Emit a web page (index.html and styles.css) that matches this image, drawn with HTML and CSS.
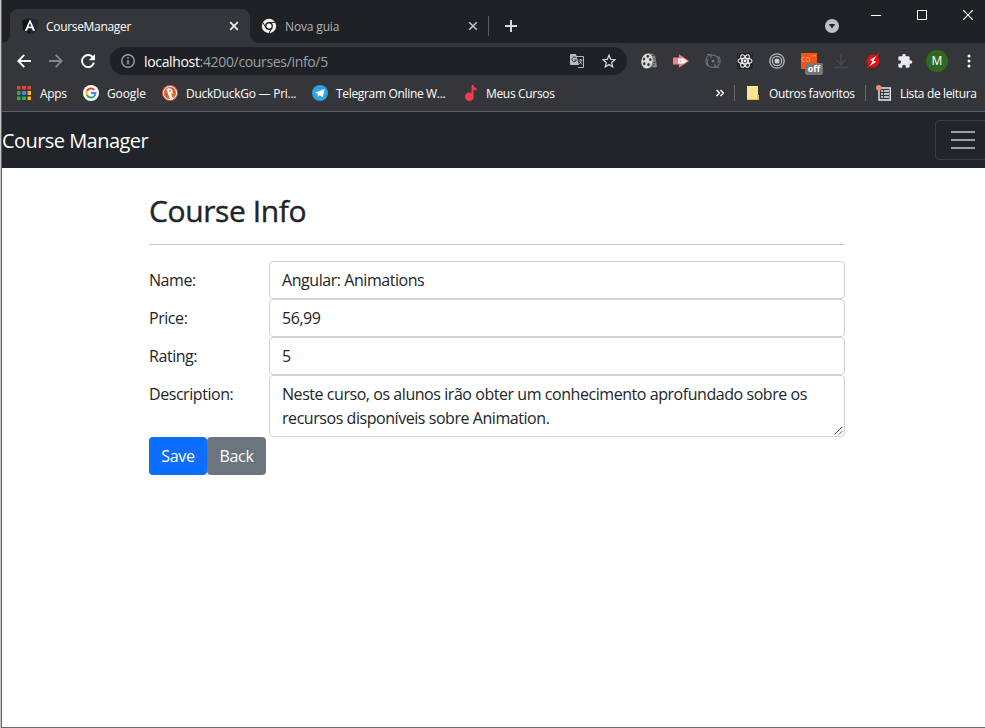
FILE: index.html
```html
<!DOCTYPE html>
<html lang="pt-BR">
<head>
<meta charset="utf-8">
<title>CourseManager</title>
<link rel="stylesheet" href="styles.css">
</head>
<body>
<div class="window">
  <header class="browser">
    <div class="tabstrip">
      <div class="tab tab-active">
        <svg class="ic" width="16" height="16" viewBox="0 0 16 16"><path fill="#10131a" d="M8 0l8 2.600-1.200 10L8 16l-6.800-3.400L0 2.600z"/><path fill="#1d2b3a" d="M8 0l8 2.600-1.200 10L8 16z"/><path fill="#fff" fill-rule="evenodd" d="M8 1.200L2.800 12.800h2.300l1-2.600h3.800l1 2.600h2.300zM8 5l1.400 3.400H6.600z"/></svg>
        <span class="tab-title t-manager">CourseManager</span>
        <svg class="close" width="10" height="10" viewBox="0 0 10 10"><path d="M1.200 1.200l7.600 7.600M8.800 1.200l-7.600 7.600" stroke="#f1f3f4" stroke-width="1.700"/></svg>
      </div>
      <div class="tab tab-idle">
        <svg class="ic" width="16" height="16" viewBox="0 0 16 16"><circle cx="8" cy="8" r="7.200" fill="#f1f1f1"/><circle cx="8" cy="8" r="3.900" fill="#202124"/><circle cx="8" cy="8" r="2.500" fill="#fff"/><path d="M8 4.400h6.400M4.900 9.800L1.700 4.300M11.100 9.800l-3.300 5.500" stroke="#202124" stroke-width="1"/></svg>
        <span class="tab-title t-nova">Nova guia</span>
        <svg class="close" width="10" height="10" viewBox="0 0 10 10"><path d="M1.200 1.200l7.600 7.600M8.800 1.200l-7.600 7.600" stroke="#c5c8cc" stroke-width="1.500"/></svg>
      </div>
      <span class="tab-divider"></span>
      <svg class="new-tab" width="12" height="12" viewBox="0 0 12 12"><path d="M6 0v12M0 6h12" stroke="#d5d7da" stroke-width="2"/></svg>
      <svg class="tab-search" width="14" height="14" viewBox="0 0 14 14"><circle cx="7" cy="7" r="7" fill="#bdc1c6"/><path d="M3.800 5h6.400L7 9.500z" fill="#202124"/></svg>
      <div class="controls">
        <svg width="10" height="10" viewBox="0 0 10 10"><path d="M0 5.500h10" stroke="#fff"/></svg>
        <svg width="10" height="10" viewBox="0 0 10 10"><path d="M.5.5h9v9h-9z" fill="none" stroke="#fff"/></svg>
        <svg width="10" height="10" viewBox="0 0 10 10"><path d="M0 0l10 10M10 0L0 10" stroke="#fff" stroke-width="1.200"/></svg>
      </div>
    </div>

    <div class="toolbar">
      <svg class="nav" width="14" height="14" viewBox="0 0 14 14"><path d="M14 7H1.500M7.300.8L1.200 7l6.100 6.200" fill="none" stroke="#fff" stroke-width="1.800"/></svg>
      <svg class="nav" width="14" height="14" viewBox="0 0 14 14"><path d="M0 7h12.500M6.700.8L12.800 7l-6.100 6.200" fill="none" stroke="#85878a" stroke-width="1.800"/></svg>
      <svg class="nav" width="14" height="14" viewBox="0 0 14 14"><path d="M12 3.600A6 6 0 1 0 12.900 8.500" fill="none" stroke="#fff" stroke-width="1.900"/><path d="M14 0v6.200H7.800z" fill="#fff"/></svg>
      <div class="omnibox">
        <svg width="14" height="14" viewBox="0 0 14 14"><circle cx="7" cy="7" r="6.200" fill="none" stroke="#9aa0a6" stroke-width="1.400"/><path d="M7 6v4.500M7 3.300v1.500" stroke="#9aa0a6" stroke-width="1.500"/></svg>
        <span class="url"><b>localhost</b>:4200/courses/info/5</span>
        <svg class="translate" width="14" height="14" viewBox="0 0 14 14"><path d="M6 2.500h7.500v11H8" fill="none" stroke="#b5b7ba"/><path d="M0 1q0-1 1-1h5l3 11H1q-1 0-1-1z" fill="#b8babd"/><path d="M6.300 4.200A2.300 2.300 0 1 0 6.500 6H4.500" fill="none" stroke="#303134"/><path d="M8.500 6h4M10.500 5v1M12 6q-.8 3-3 4M9.500 7q1 2 3 3.500" fill="none" stroke="#b5b7ba" stroke-width=".9"/></svg>
        <svg class="star" width="14" height="14" viewBox="0 0 14 14"><path d="M7 1.300l1.700 4 4.300.4-3.300 2.900 1 4.200L7 10.600l-3.700 2.200 1-4.200L1 5.700l4.300-.4z" fill="none" stroke="#d0d2d5" stroke-width="1.300"/></svg>
      </div>
      <div class="extensions">
        <svg width="16" height="16" viewBox="0 0 16 16"><path d="M7 .2L12 1q3 2 3 7l1 6-3 .5-2-1-3 2z" fill="#8b8b8b"/><ellipse cx="6" cy="8" rx="5.600" ry="7.600" fill="#dcdcdc" transform="rotate(10 6 8)"/><g fill="#35363a"><ellipse cx="6.800" cy="3.300" rx="1.300" ry="1.500"/><ellipse cx="3" cy="6" rx="1.200" ry="1.600"/><ellipse cx="9.300" cy="6.500" rx="1.200" ry="1.600"/><ellipse cx="3.300" cy="10.700" rx="1.200" ry="1.600"/><ellipse cx="7.500" cy="11.500" rx="1.300" ry="1.600"/></g><path d="M11 3l2-1M12.300 6h2M12.300 9.500l2.500-.5M11.500 12.500l2-1" stroke="#333"/></svg>
        <svg width="16" height="16" viewBox="0 0 16 16"><path d="M0 4.500h6V1.300L16 8 6 14.700v-3.200H0z" fill="#f77f80"/><path d="M5 5.500h5.500v5H5z" fill="#fff"/><path d="M10 5l4.500 3-4.500 3z" fill="#ffe8e8"/><path d="M7 7l2.500 1L7 9z" fill="#f99"/></svg>
        <svg width="16" height="16" viewBox="0 0 16 16"><path d="M6 1.500a6.800 6.800 0 0 0-3 11.500M10 14.500A6.800 6.800 0 0 0 13 3M5 3.500A5 5 0 0 1 12.500 10M11 12.700A5 5 0 0 1 3.500 6M2 1.500h4v4M14 14.500h-4v-4" fill="none" stroke="#6b6d70" stroke-width="1.200"/><circle cx="8" cy="8" r="1.500" fill="#77797b"/></svg>
        <svg width="16" height="16" viewBox="0 0 16 16"><path fill="#242528" d="M0 0h16v16H0z"/><g fill="none" stroke="#eee" stroke-width="1.100"><ellipse cx="8" cy="8" rx="7" ry="2.700"/><ellipse cx="8" cy="8" rx="7" ry="2.700" transform="rotate(60 8 8)"/><ellipse cx="8" cy="8" rx="7" ry="2.700" transform="rotate(120 8 8)"/></g><circle cx="8" cy="8" r="1.400" fill="#fff"/></svg>
        <svg width="16" height="16" viewBox="0 0 16 16"><g fill="none" stroke="#b6b8ba" stroke-width="1.300"><circle cx="8" cy="8" r="7.200"/><circle cx="8" cy="8" r="4.700"/></g><circle cx="8" cy="8" r="2.600" fill="#ccc"/></svg>
        <span class="ext-off"><span class="com">co<sup>m</sup></span><span class="badge">off</span></span>
        <svg width="16" height="16" viewBox="0 0 16 16"><path d="M8 1v10M3.500 7L8 11.500 12.500 7M1 14.500h14" fill="none" stroke="#47494b" stroke-width="1.500"/></svg>
        <svg width="16" height="16" viewBox="0 0 16 16"><circle cx="8" cy="8" r="6" fill="#e80f14" stroke="#e80f14"/><path d="M14 .8L4.600 6.600l2.600 1.200L2 15.200l9.400-5.800-2.600-1.200z" fill="#e80f14" stroke="#e80f14" stroke-width="1"/><path d="M11.300 3L4.800 7l2.800 1L4.700 13l6.500-4.200-2.800-1z" fill="#fff"/></svg>
        <svg width="16" height="16" viewBox="0 0 24 24"><path fill="#e8eaed" d="M20.500 11H19V7c0-1.100-.9-2-2-2h-4V3.500a2.500 2.500 0 0 0-5 0V5H4c-1.100 0-2 .9-2 2v3.800h1.500a2.700 2.700 0 0 1 0 5.400H2V20c0 1.100.9 2 2 2h3.800v-1.500a2.700 2.700 0 0 1 5.400 0V22H17c1.100 0 2-.9 2-2v-4h1.500a2.500 2.500 0 0 0 0-5z"/></svg>
      </div>
      <span class="avatar">M</span>
      <svg class="menu" width="4" height="14" viewBox="0 0 4 14"><g fill="#fff"><circle cx="2" cy="2" r="1.500"/><circle cx="2" cy="7" r="1.500"/><circle cx="2" cy="12" r="1.500"/></g></svg>
    </div>

    <div class="bookmarks">
      <svg width="14" height="14" viewBox="0 0 14 14"><path fill="#ea4335" d="M0 0h3.500v3.500H0zM5 0h4v3.500H5zM10.500 0H14v3.500h-3.500z"/><path fill="#34a853" d="M0 5h3.500v4H0zM0 10.500h3.500V14H0zM5 10.500h4V14H5z"/><path fill="#4285f4" d="M5 5h4v4H5z"/><path fill="#fbbc05" d="M10.500 5H14v4h-3.500zM10.500 10.500H14V14h-3.500z"/></svg>
      <span class="bm b-apps">Apps</span>
      <svg class="bi" width="16" height="16" viewBox="0 0 16 16"><circle cx="8" cy="8" r="8" fill="#fff"/><g fill="none" stroke-width="2"><path stroke="#ea4335" d="M11.300 4.900A4.500 4.500 0 0 0 3.900 6"/><path stroke="#fbbc05" d="M3.900 6a4.500 4.500 0 0 0 0 4"/><path stroke="#34a853" d="M3.900 10a4.500 4.500 0 0 0 7 1.400"/><path stroke="#4285f4" d="M10.900 11.400A4.500 4.500 0 0 0 12.500 8H8"/></g></svg>
      <span class="bm b-google">Google</span>
      <svg class="bi" width="16" height="16" viewBox="0 0 16 16"><circle cx="8" cy="8" r="8" fill="#de5833"/><circle cx="8" cy="8" r="6.500" fill="none" stroke="#fff"/><path d="M4.500 4.500Q6 2.800 8.500 3.500q2.500 1 2.300 4L9.500 10l1.500 3.500-3 .8L6 9z" fill="#fff"/><path d="M8.500 7.800l3.500.2-2.500 1.600z" fill="#fbbc05"/><path d="M9.500 11l2.500-.8v2.600z" fill="#65bc46"/><circle cx="8" cy="6" r=".7" fill="#234"/></svg>
      <span class="bm b-duck">DuckDuckGo — Pri...</span>
      <svg class="bi" width="16" height="16" viewBox="0 0 16 16"><circle cx="8" cy="8" r="8" fill="#2ca5e0"/><path d="M3 7.800L12.600 4l-1.700 8.200-3.300-2-1.600 1.500-.4-3z" fill="#fff"/></svg>
      <span class="bm b-telegram">Telegram Online W...</span>
      <svg class="bi" width="16" height="16" viewBox="0 0 16 16"><circle cx="6.300" cy="11.700" r="4.300" fill="#f43b52"/><path d="M8.600 12V0h1.600q.3 2.500 3.300 3.300v2.500q-2-.2-3-1.200v7z" fill="#f43b52"/></svg>
      <span class="bm b-cursos">Meus Cursos</span>
      <svg class="more" width="8" height="8" viewBox="0 0 8 8"><path d="M.5 1l3 3-3 3M4.500 1l3 3-3 3" fill="none" stroke="#fff" stroke-width="1.400"/></svg>
      <span class="bm-divider"></span>
      <svg class="folder" width="12" height="14" viewBox="0 0 12 14"><path fill="#ffe58f" d="M0 0h11v9l1 1v4H0z"/><path fill="#e8c34c" d="M0 13h9v1H0zM10 9h2v5h-3v-1h1z"/></svg>
      <span class="bm b-outros">Outros favoritos</span>
      <span class="bm-divider"></span>
      <svg class="list" width="16" height="16" viewBox="0 0 16 16"><path d="M3 3h11.300v12H3z" fill="none" stroke="#e8eaed" stroke-width="1.400"/><path d="M5 6h2M8 6h5M5 9h2M8 9h5M5 12h2M8 12h5" stroke="#e8eaed" stroke-width="1.300"/><circle cx="2.700" cy="2.700" r="2.700" fill="#f28b82"/></svg>
      <span class="bm b-lista">Lista de leitura</span>
    </div>
  </header>

  <nav class="navbar">
    <span class="brand">Course Manager</span>
    <span class="toggler"><svg width="30" height="30" viewBox="0 0 30 30"><path stroke="#9b9da0" stroke-width="2" d="M3 7h24M3 15h24M3 23h24"/></svg></span>
  </nav>

  <main class="container">
    <h2>Course Info</h2>
    <hr>
    <form>
      <div class="row"><label>Name:</label><div class="control">Angular: Animations</div></div>
      <div class="row"><label>Price:</label><div class="control">56,99</div></div>
      <div class="row"><label>Rating:</label><div class="control">5</div></div>
      <div class="row"><label>Description:</label><div class="control area">Neste curso, os alunos irão obter um conhecimento aprofundado sobre os<br>recursos disponíveis sobre Animation.
        <svg class="grip" width="9" height="9" viewBox="0 0 9 9"><path d="M.5 8.500l8-8M5 8.500L8.500 5" stroke="#555"/></svg></div></div>
      <div class="buttons"><button type="button" class="btn save">Save</button><button type="button" class="btn back">Back</button></div>
    </form>
  </main>
</div>
</body>
</html>
```
FILE: styles.css
```css
* { box-sizing: border-box; }
body { margin: 0; width: 985px; height: 728px; overflow: hidden; background: #c8c8c8; font-family: "Open Sans", "Noto Sans", sans-serif; color: #212529; }
svg { display: block; flex: none; }
.window { width: 985px; height: 728px; border-left: 1px solid #606163; border-bottom: 1px solid #6b6b6b; margin-left: 1px; background: #fff; }
.browser { background: #35363a; height: 112px; border-bottom: 1px solid #5f6063; color: #fff; font-size: 12px; white-space: nowrap; }
.tabstrip { height: 43px; background: #202124; display: flex; align-items: flex-start; padding-left: 8px; }
.tab { height: 34px; margin-top: 9px; display: flex; align-items: center; }
.tab-active { width: 240px; background: #35363a; border-radius: 8px 8px 0 0; padding: 0 11px 0 12px; position: relative; }
.tab-active::before, .tab-active::after { content: ""; position: absolute; bottom: 0; width: 8px; height: 8px; }
.tab-active::before { left: -8px; background: radial-gradient(circle at 0 0, #202124 7.500px, #35363a 8px); }
.tab-active::after { right: -8px; background: radial-gradient(circle at 100% 0, #202124 7.500px, #35363a 8px); }
.tab-title { margin-left: 8px; }
.t-manager { letter-spacing: -.32px; }
.t-nova { letter-spacing: -.15px; }
.tab-idle { width: 238px; padding: 0 10px 0 11px; color: #b2b5b9; }
.close { margin-left: auto; }
.tab-divider { width: 1px; height: 20px; margin-top: 16px; background: #5b5c60; }
.new-tab { margin: 20px 0 0 16px; }
.tab-search { margin: 19px 0 0 308px; }
.controls { display: flex; gap: 36px; margin: 10px 0 0 32px; }
.toolbar { height: 36px; display: flex; align-items: center; padding-left: 15px; }
.nav { margin-right: 18px; }
.omnibox { width: 517px; height: 28px; margin-left: -3px; border-radius: 14px; background: #202124; display: flex; align-items: center; padding: 0 11px; }
.url { margin-left: 9px; color: #9aa0a6; font-size: 14px; letter-spacing: -.34px; }
.url b { font-weight: 400; color: #fff; }
.translate { margin-left: auto; }
.star { margin-left: 18px; }
.extensions { display: flex; align-items: center; gap: 16px; margin-left: 14px; }
.ext-off { width: 16px; height: 16px; background: #ff4f0f; position: relative; }
.com { position: absolute; left: 0; top: -1px; font-size: 9px; line-height: 14px; color: #ffa17d; }
.com sup { font-size: 6px; line-height: 0; }
.badge { position: absolute; left: 4px; top: 10px; width: 18px; height: 12px; border-radius: 2px; background: #747679; font-size: 9px; line-height: 11px; font-weight: 700; text-align: center; }
.avatar { width: 22px; height: 22px; border-radius: 50%; background: #33691e; text-align: center; line-height: 22px; margin-left: 13px; }
.menu { margin-left: 19px; }
.bookmarks { height: 28px; display: flex; align-items: center; padding-left: 15px; }
.bm { flex: none; margin-left: 8px; letter-spacing: -.33px; }
.bookmarks .bi { margin-left: 16px; }
.b-apps { width: 27px; margin-left: 9px; }
.b-google { width: 39px; letter-spacing: -.1px; }
.b-duck { width: 110px; letter-spacing: -.25px; }
.b-telegram { width: 111px; }
.b-cursos { width: 69px; margin-left: 7px; }
.b-outros { width: 86px; margin-left: 10px; }
.b-lista { width: 77px; letter-spacing: -.36px; }
.more { margin-left: 161px; }
.bm-divider { width: 1px; height: 16px; background: #66686b; margin-left: 10px; }
.folder { margin-left: 12px; }
.list { margin-left: 10px; }
.navbar { height: 56px; background: #212529; color: #fff; display: flex; align-items: center; font-size: 20px; }
.brand { letter-spacing: -.55px; }
.toggler { margin-left: auto; width: 56px; height: 40px; border: 1px solid #3a3e42; border-radius: 4px; padding: 4px 12px; margin-right: -5px; }
.container { width: 696px; margin-left: 147px; padding-top: 24px; font-size: 16px; line-height: 24px; letter-spacing: -.445px; }
h2 { margin: 0; font-size: 30px; line-height: 38px; font-weight: 500; height: 38px; letter-spacing: -.4px; -webkit-text-stroke: .4px #212529; }
hr { margin: 14px 0 16px; height: 1px; border: 0; background: #c8c9ca; }
.row { display: flex; }
label { width: 120px; padding-top: 7px; }
.control { width: 576px; height: 38px; border: 1px solid #ced4da; border-radius: 4px; padding: 6px 12px; white-space: nowrap; position: relative; }
.area { height: 62px; }
.grip { position: absolute; right: 1px; bottom: 1px; }
.buttons { display: flex; }
.btn { font: inherit; letter-spacing: -.3px; color: #fff; border: 0; border-radius: 4px; height: 38px; padding: 0; }
.save { width: 58px; background: #0d6efd; }
.back { width: 59px; background: #6c757d; }
```
